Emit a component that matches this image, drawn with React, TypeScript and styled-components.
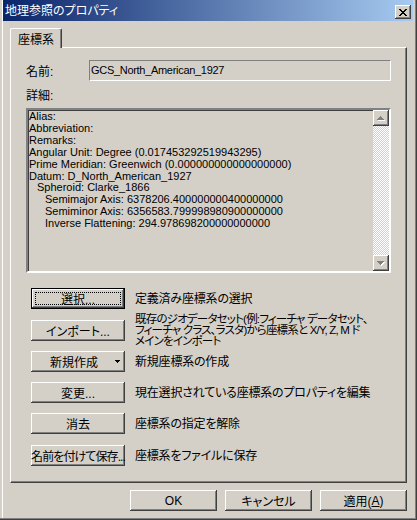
import React from 'react';
import styled, { createGlobalStyle, css } from 'styled-components';

const face = '#d4d0c8';
const shadow = '#808080';
const dark = '#404040';

const details: { text: string; indent: number }[] = [
  { text: 'Alias:', indent: 0 },
  { text: 'Abbreviation:', indent: 0 },
  { text: 'Remarks:', indent: 0 },
  { text: 'Angular Unit: Degree (0.017453292519943295)', indent: 0 },
  { text: 'Prime Meridian: Greenwich (0.000000000000000000)', indent: 0 },
  { text: 'Datum: D_North_American_1927', indent: 0 },
  { text: 'Spheroid: Clarke_1866', indent: 1 },
  { text: 'Semimajor Axis: 6378206.400000000400000000', indent: 2 },
  { text: 'Semiminor Axis: 6356583.799998980900000000', indent: 2 },
  { text: 'Inverse Flattening: 294.978698200000000000', indent: 2 },
];

const CloseGlyph = () => (
  <svg width="8" height="7" viewBox="0 0 8 7" shapeRendering="crispEdges">
    <path
      fill="#000"
      d="M0 0h2v1H0z M6 0h2v1H6z M1 1h2v1H1z M5 1h2v1H5z M2 2h4v1H2z M3 3h2v1H3z M2 4h4v1H2z M1 5h2v1H1z M5 5h2v1H5z M0 6h2v1H0z M6 6h2v1H6z"
    />
  </svg>
);

// greyed-out scroll arrow, drawn pixel by pixel with a white emboss
const ScrollArrow = ({ down }: { down?: boolean }) => {
  const up = 'M3 0h1v1H3z M2 1h3v1H2z M1 2h5v1H1z M0 3h7v1H0z';
  const dn = 'M0 0h7v1H0z M1 1h5v1H1z M2 2h3v1H2z M3 3h1v1H3z';
  const d = down ? dn : up;
  return (
    <svg width="8" height="5" viewBox="0 0 8 5" shapeRendering="crispEdges">
      <path d={d} fill="#fff" transform="translate(1 1)" />
      <path d={d} fill={shadow} />
    </svg>
  );
};

const DropArrow = () => (
  <svg width="5" height="3" viewBox="0 0 5 3" shapeRendering="crispEdges">
    <path d="M0 0h5v1H0z M1 1h3v1H1z M2 2h1v1H2z" fill="#000" />
  </svg>
);

const App = () => {
  return (
    <>
      <GlobalStyle />
      <Window>
        <TitleBar>
          <Title>地理参照のプロパティ</Title>
          <CloseButton>
            <CloseGlyph />
          </CloseButton>
        </TitleBar>
        <Body>
          <TabStrip>
            <Tab>座標系</Tab>
          </TabStrip>
          <Panel>
            <NameRow>
              <FieldLabel>名前:</FieldLabel>
              <NameField>GCS_North_American_1927</NameField>
            </NameRow>
            <DetailLabel>詳細:</DetailLabel>
            <DetailBox>
              <DetailText>
                {details.map((d) => (
                  <DetailLine key={d.text} $indent={d.indent}>
                    {d.text}
                  </DetailLine>
                ))}
              </DetailText>
              <ScrollBar>
                <ScrollButton>
                  <ScrollArrow />
                </ScrollButton>
                <ScrollTrack />
                <ScrollButton>
                  <ScrollArrow down />
                </ScrollButton>
              </ScrollBar>
            </DetailBox>

            <ActionList>
              <ActionRow>
                <Button $isDefault>
                  <FocusRing>選択...</FocusRing>
                </Button>
                <Description>定義済み座標系の選択</Description>
              </ActionRow>
              <ActionRow $loose>
                <Button>インポート...</Button>
                <Description $dense>
                  既存のジオデータセット(例:フィーチャ データセット、
                  <br />
                  フィーチャ クラス、ラスタ)から座標系と X/Y, Z, M ド
                  <br />
                  メインをインポート
                </Description>
              </ActionRow>
              <ActionRow>
                <MenuButton>
                  <span>新規作成</span>
                  <DropArrow />
                </MenuButton>
                <Description>新規座標系の作成</Description>
              </ActionRow>
              <ActionRow>
                <Button>変更...</Button>
                <Description>現在選択されている座標系のプロパティを編集</Description>
              </ActionRow>
              <ActionRow>
                <Button>消去</Button>
                <Description>座標系の指定を解除</Description>
              </ActionRow>
              <ActionRow $loose>
                <Button $tight>名前を付けて保存...</Button>
                <Description>座標系をファイルに保存</Description>
              </ActionRow>
            </ActionList>
          </Panel>
          <Footer>
            <FooterButton>OK</FooterButton>
            <FooterButton>キャンセル</FooterButton>
            <FooterButton>
              適用(<u>A</u>)
            </FooterButton>
          </Footer>
        </Body>
      </Window>
    </>
  );
};

export default App;

// Styled Components
const GlobalStyle = createGlobalStyle`
  * { box-sizing: border-box; }
  html, body {
    margin: 0;
    padding: 0;
    background: ${face};
  }
  body {
    font-family: "Liberation Sans", "Noto Sans CJK JP", sans-serif;
    font-size: 12px;
    color: #000;
    font-feature-settings: "palt" 1;
  }
`;

const Window = styled.div`
  width: 417px;
  height: 520px;
  display: flex;
  flex-direction: column;
  padding: 0 4px 3px 3px;
  background: ${face};
  box-shadow: inset -1px -1px ${dark}, inset -2px -2px ${shadow},
    inset 2px 0 ${face}, inset 3px 0 #fff;
`;

const TitleBar = styled.div`
  flex: none;
  height: 21px;
  display: flex;
  align-items: flex-start;
  justify-content: space-between;
  padding: 0 2px;
  background: linear-gradient(to right, #0a246a, #a6caf0);
`;

const Title = styled.div`
  color: #fff;
  line-height: 21px;
  padding-top: 1px;
  white-space: nowrap;
`;

const CloseButton = styled.div`
  width: 16px;
  height: 14px;
  margin-top: 5px;
  display: flex;
  align-items: center;
  justify-content: center;
  background: ${face};
  box-shadow: inset -1px -1px ${dark}, inset 1px 1px #fff, inset -2px -2px ${shadow};
`;

const Body = styled.div`
  flex: 1;
  display: flex;
  flex-direction: column;
  padding: 7px 6px 6px 7px;
`;

const TabStrip = styled.div`
  display: flex;
`;

const Tab = styled.div`
  position: relative;
  z-index: 1;
  width: 52px;
  height: 20px;
  margin-bottom: -1px;
  display: flex;
  align-items: center;
  justify-content: center;
  padding-bottom: 1px;
  background: ${face};
  border-top: 1px solid #fff;
  border-left: 1px solid #fff;
  border-right: 1px solid ${dark};
  border-top-left-radius: 2px;
  border-top-right-radius: 2px;
  box-shadow: inset -1px 0 ${shadow};
`;

const Panel = styled.div`
  height: 436px;
  display: flex;
  flex-direction: column;
  padding: 12px 15px 0 15px;
  border-top: 1px solid #fff;
  border-left: 1px solid #fff;
  border-right: 1px solid ${dark};
  border-bottom: 1px solid ${dark};
  box-shadow: inset -1px -1px ${shadow};
`;

const NameRow = styled.div`
  display: flex;
  align-items: center;
  height: 21px;
`;

const FieldLabel = styled.div`
  width: 63px;
  flex: none;
`;

const NameField = styled.div`
  flex: 1;
  height: 21px;
  padding-left: 1px;
  line-height: 19px;
  font-size: 11px;
  letter-spacing: -0.3px;
  border-top: 1px solid ${shadow};
  border-left: 1px solid ${shadow};
  border-bottom: 1px solid #fff;
  border-right: 1px solid #fff;
  white-space: nowrap;
`;

const DetailLabel = styled.div`
  height: 16px;
  line-height: 16px;
  margin: 7px 0 4px;
`;

const DetailBox = styled.div`
  height: 165px;
  display: flex;
  border-style: solid;
  border-width: 2px;
  border-color: ${shadow} #fff #fff ${shadow};
  box-shadow: inset 1px 1px ${dark}, inset -1px -1px ${face};
`;

const DetailText = styled.div`
  flex: 1;
  padding: 1px 0 0 1px;
  font-size: 11px;
  line-height: 11.9px;
  overflow: hidden;
`;

const DetailLine = styled.div<{ $indent: number }>`
  white-space: pre;
  padding-left: ${(p) => p.$indent * 8}px;
`;

const ScrollBar = styled.div`
  width: 16px;
  flex: none;
  display: flex;
  flex-direction: column;
`;

const ScrollButton = styled.div`
  height: 16px;
  flex: none;
  display: flex;
  align-items: center;
  justify-content: center;
  background: ${face};
  box-shadow: inset -1px -1px ${dark}, inset 1px 1px #fff, inset -2px -2px ${shadow};
`;

const ScrollTrack = styled.div`
  flex: 1;
  background-image: conic-gradient(#fff 25%, ${face} 0 50%, #fff 0 75%, ${face} 0);
  background-size: 2px 2px;
`;

const ActionList = styled.div`
  display: flex;
  flex-direction: column;
  gap: 10px;
  margin-top: 15px;
`;

const ActionRow = styled.div<{ $loose?: boolean }>`
  display: flex;
  align-items: center;
  gap: 10px;
  height: 21px;
  padding-left: 5px;
  ${(p) =>
    p.$loose &&
    css`
      margin-top: 1px;
    `}
`;

const Button = styled.button<{ $isDefault?: boolean; $tight?: boolean }>`
  width: 94px;
  height: 21px;
  flex: none;
  margin: 0;
  padding: 0;
  display: flex;
  align-items: center;
  justify-content: center;
  border: none;
  background: ${face};
  font: inherit;
  color: #000;
  white-space: nowrap;
  letter-spacing: ${(p) => (p.$tight ? '-0.9px' : '0')};
  box-shadow: inset -1px -1px ${dark}, inset 1px 1px #fff, inset -2px -2px ${shadow};
  ${(p) =>
    p.$isDefault &&
    css`
      box-shadow: inset 0 0 0 1px #000, inset -2px -2px ${dark}, inset 2px 2px #fff,
        inset -3px -3px ${shadow};
    `}
`;

const FocusRing = styled.span`
  width: 86px;
  height: 13px;
  display: flex;
  align-items: center;
  justify-content: center;
  border: 1px dotted #000;
`;

const MenuButton = styled(Button)`
  justify-content: flex-end;
  gap: 17px;
  padding-right: 5px;
`;

const Description = styled.div<{ $dense?: boolean }>`
  font-size: ${(p) => (p.$dense ? '11.5px' : '12px')};
  line-height: ${(p) => (p.$dense ? '11.3px' : '12px')};
  letter-spacing: ${(p) => (p.$dense ? '-0.8px' : '-0.2px')};
  white-space: nowrap;
`;

const Footer = styled.div`
  display: flex;
  justify-content: flex-end;
  gap: 8px;
  margin-top: 7px;
`;

const FooterButton = styled(Button)`
  width: 87px;
`;
